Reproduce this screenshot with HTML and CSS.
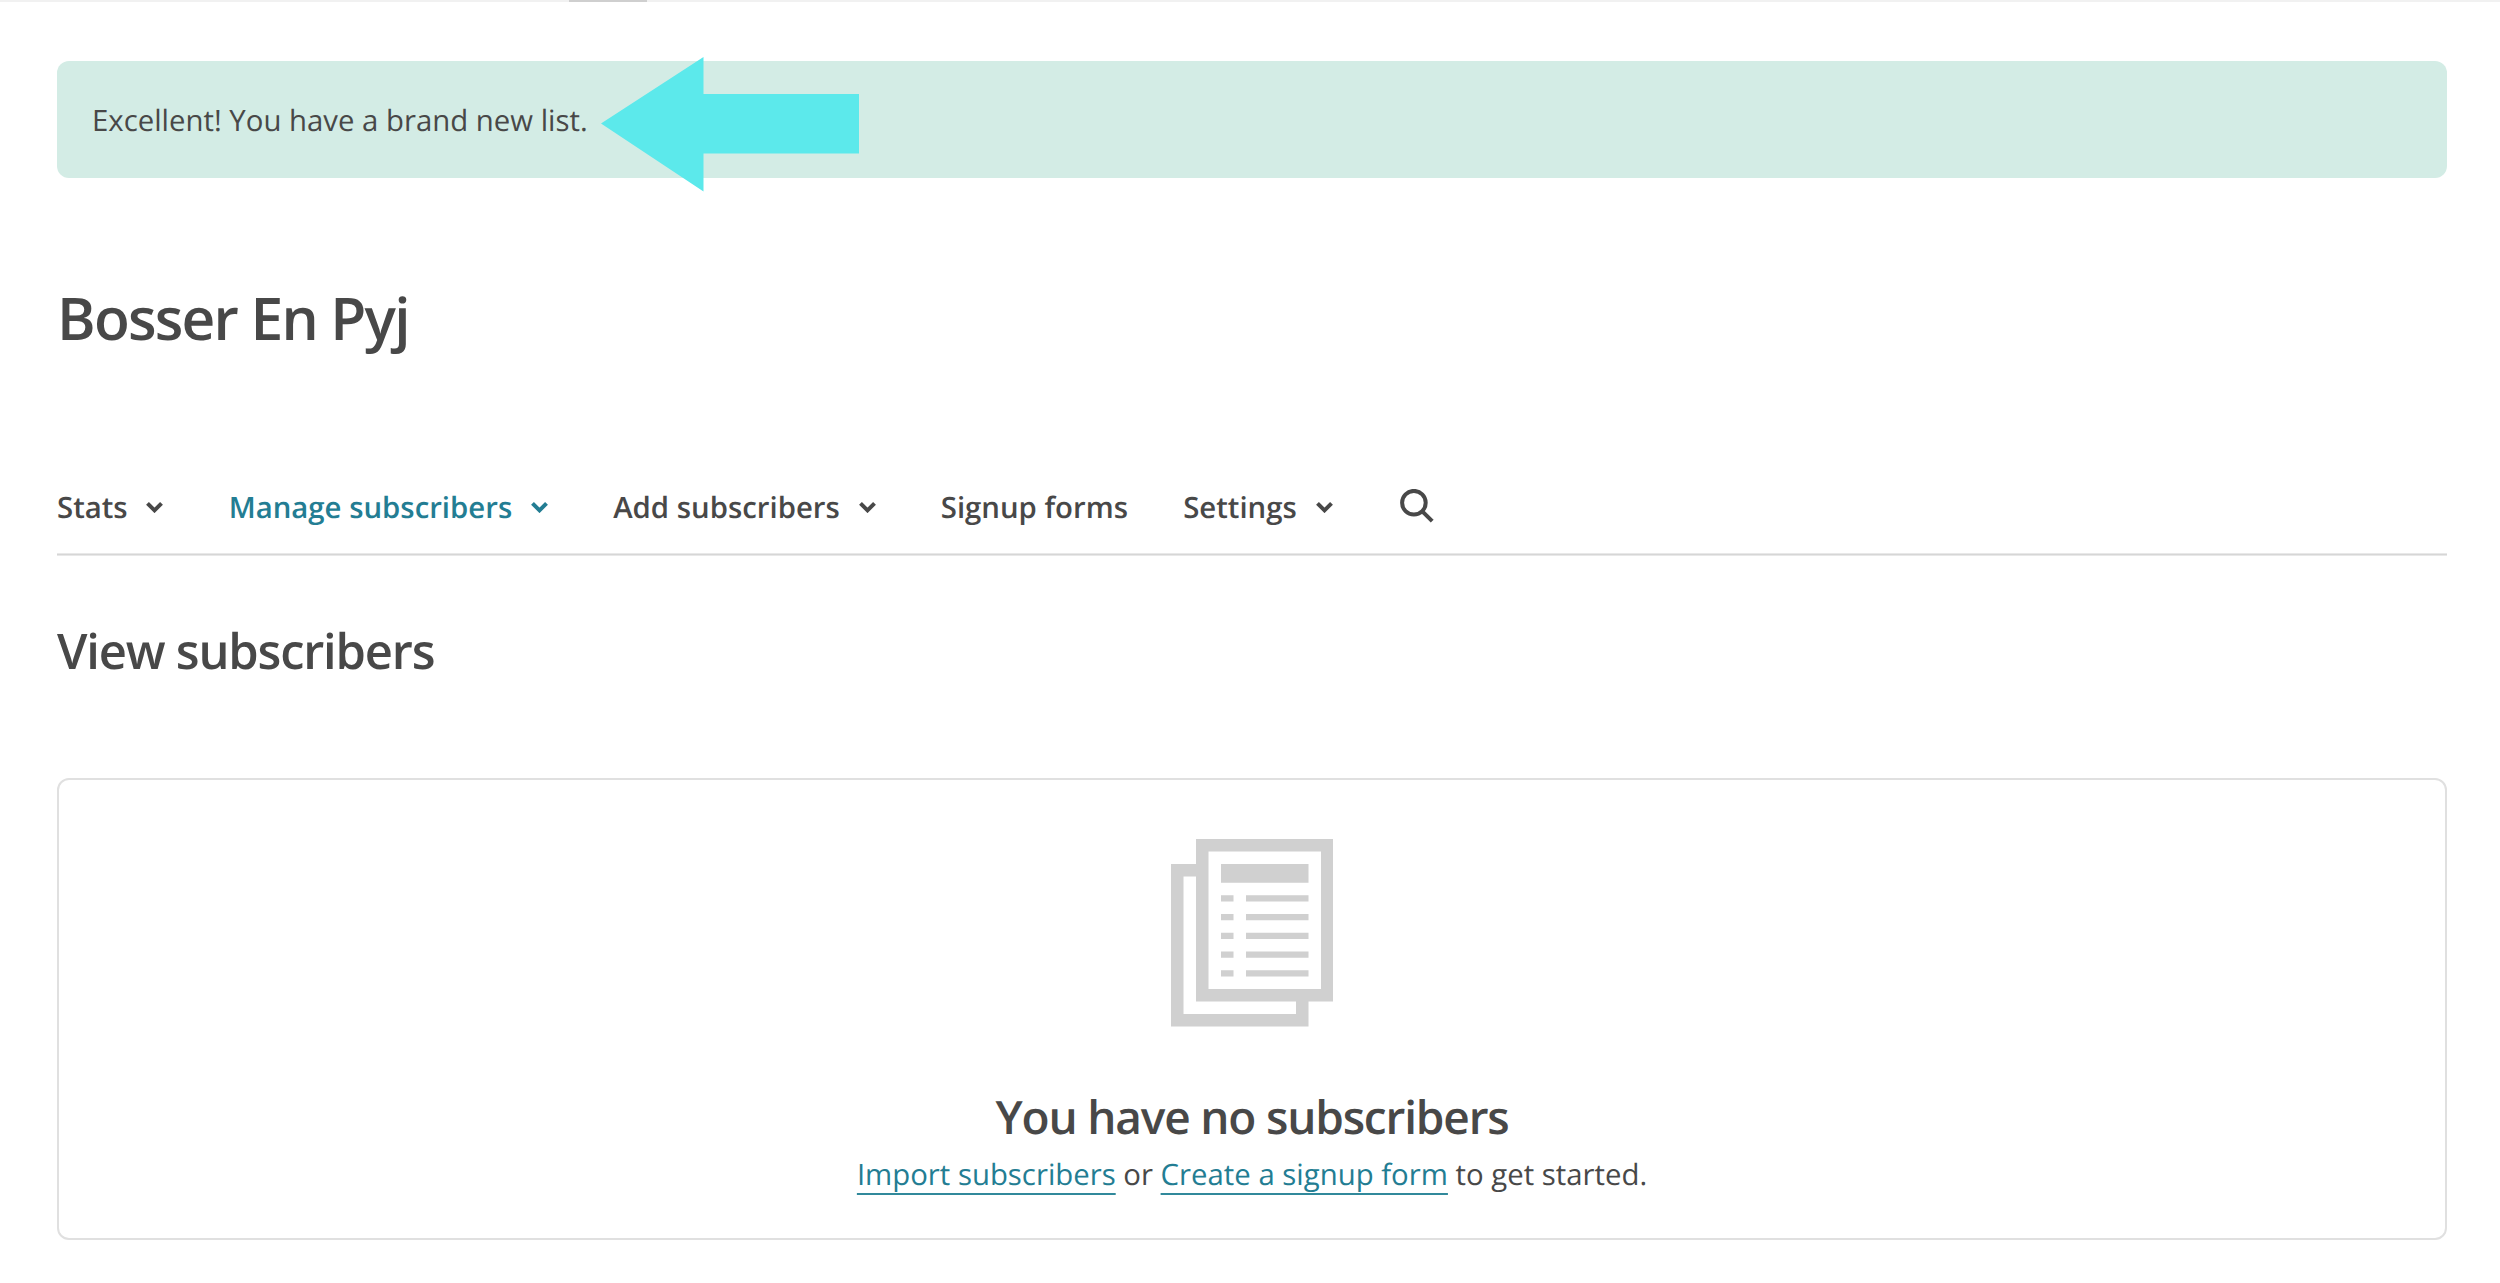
FILE: index.html
```
<!DOCTYPE html>
<html lang="en">
<head>
<meta charset="utf-8">
<title>Bosser En Pyj</title>
<link rel="stylesheet" href="styles.css">
</head>
<body>
<div class="top-bar"><div class="top-bar-tab"></div></div>
<main class="page">
  <div class="alert">
    <p class="alert-text">Excellent! You have a brand new list.</p>
    <svg class="arrow" viewBox="0 0 258 135" width="258" height="135"><path d="M0 66.500L102.500 0V37H258V96.500H102.500V134.500Z"/></svg>
  </div>
  <h1 class="title">Bosser En Pyj</h1>
  <nav class="nav">
    <a class="nav-item">Stats<svg class="chevron" viewBox="0 0 17 12"><path d="M1.500 2.300L8.500 9.300L15.500 2.300"/></svg></a>
    <a class="nav-item nav-item-active">Manage subscribers<svg class="chevron" viewBox="0 0 17 12"><path d="M1.500 2.300L8.500 9.300L15.500 2.300"/></svg></a>
    <a class="nav-item">Add subscribers<svg class="chevron" viewBox="0 0 17 12"><path d="M1.500 2.300L8.500 9.300L15.500 2.300"/></svg></a>
    <a class="nav-item">Signup forms</a>
    <a class="nav-item">Settings<svg class="chevron" viewBox="0 0 17 12"><path d="M1.500 2.300L8.500 9.300L15.500 2.300"/></svg></a>
    <svg class="search" viewBox="0 0 34 34"><circle cx="13.900" cy="13.700" r="11.800"/><path d="M22.300 22.300L32.200 32.200"/></svg>
  </nav>
  <h2 class="subtitle">View subscribers</h2>
  <section class="empty">
    <svg class="doc" viewBox="0 0 26 30">
      <path class="doc-frame" d="M4 5H1V29H21V26M5 1H25V25H5Z"/>
      <path class="doc-lines" d="M8 4H22V7H8ZM8 9h2v1h-2zM12 9h10v1h-10zM8 12h2v1h-2zM12 12h10v1h-10zM8 15h2v1h-2zM12 15h10v1h-10zM8 18h2v1h-2zM12 18h10v1h-10zM8 21h2v1h-2zM12 21h10v1h-10z"/>
    </svg>
    <h3 class="empty-title">You have no subscribers</h3>
    <p class="empty-text"><a class="link">Import subscribers</a> or <a class="link">Create a signup form</a> to get started.</p>
  </section>
</main>
</body>
</html>
```
FILE: styles.css
```
body {
  margin: 0;
  background: #fff;
  color: #484848;
  font: 29.35px/50px "Open Sans", sans-serif;
  text-rendering: geometricPrecision;
}
h1, h2, h3, p { margin: 0; font-weight: 400; }
.top-bar { height: 2px; background: #f1f1f1; }
.top-bar-tab { width: 78px; height: 2px; margin-left: 569px; background: #cfcfcf; }
.page { padding: 59px 53px 0 57px; }
.alert {
  position: relative;
  display: flex;
  align-items: center;
  height: 117px;
  padding-left: 35px;
  border-radius: 12px;
  background: #d3ece5;
}
.arrow { position: absolute; left: 544px; top: -4.5px; fill: #5ce9eb; }
.title, .subtitle, .empty-title { font-weight: 600; }
.title { margin-top: 100px; font-size: 58.7px; line-height: 80px; letter-spacing: -1.8px; }
.nav {
  display: flex;
  align-items: center;
  gap: 55.2px;
  height: 92px;
  margin-top: 103px;
  padding-bottom: 1px;
  border-bottom: 1px solid #d6d6d6;
  box-shadow: 0 1px #e8e8e8, inset 0 -1px #e8e8e8;
  font-weight: 600;
}
.nav-item { display: flex; align-items: center; }
.nav-item-active { color: #237d93; }
.chevron {
  width: 17px;
  height: 12px;
  margin: 0 10px 0 18.8px;
  fill: none;
  stroke: currentColor;
  stroke-width: 4;
}
.search {
  width: 34px;
  height: 34px;
  margin: 0 0 2px 2px;
  fill: none;
  stroke: currentColor;
  stroke-width: 4;
}
.subtitle { margin-top: 63px; font-size: 48.9px; line-height: 66px; letter-spacing: -1.2px; }
.empty {
  box-sizing: border-box;
  display: flex;
  flex-direction: column;
  align-items: center;
  height: 462px;
  margin-top: 94px;
  padding-top: 59px;
  border: 2px solid #e0e0e0;
  border-radius: 12px;
}
.doc { width: 162.5px; height: 187.5px; }
.doc-frame { fill: none; stroke: #d0d0d0; stroke-width: 2; }
.doc-lines { fill: #d0d0d0; }
.empty-title { margin-top: 59px; font-size: 46px; line-height: 62px; letter-spacing: -1.18px; }
.empty-text { padding-top: 1px; }
.link {
  color: #237d93;
  text-decoration: underline 2px #31899b;
  text-decoration-skip-ink: none;
  text-underline-offset: 8px;
}
```
